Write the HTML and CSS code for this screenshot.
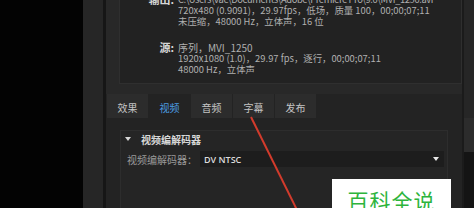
FILE: index.html
```html
<!DOCTYPE html>
<html lang="zh">
<head>
<meta charset="utf-8">
<link rel="stylesheet" href="styles.css">
</head>
<body>
<div class="app">
  <div class="blackcol"></div>
  <div class="side"></div>
  <div class="sep"></div>
  <div class="main">
    <div class="info">
      <div class="group">
        <div class="lbl">输出:</div>
        <div class="lines">
          <div class="path">C:\Users\Vae\Documents\Adobe\Premiere Pro\9.0\MVI_1250.avi</div>
          <div>720x480 (0.9091)，29.97fps，低场，质量 100，00;00;07;11</div>
          <div>未压缩，48000 Hz，立体声，16 位</div>
        </div>
      </div>
      <div class="group g2">
        <div class="lbl">源:</div>
        <div class="lines">
          <div class="first">序列，MVI_1250</div>
          <div>1920x1080 (1.0)，29.97 fps，逐行，00;00;07;11</div>
          <div>48000 Hz，立体声</div>
        </div>
      </div>
    </div>
    <div class="tabs">
      <div class="tab">效果</div>
      <div class="tab active">视频</div>
      <div class="tab">音频</div>
      <div class="tab">字幕</div>
      <div class="tab">发布</div>
    </div>
    <div class="content">
      <div class="section">
        <div class="sec-head"><span class="tri"></span>视频编解码器</div>
        <div class="row">
          <div class="row-lbl">视频编解码器：</div>
          <div class="select"><span>DV NTSC</span><span class="arrow"></span></div>
        </div>
      </div>
    </div>
  </div>
  <div class="sep2"></div>
  <div class="rightcol">
    <div class="rc-top"></div>
    <div class="rc-mid"></div>
    <div class="rc-bot"></div>
  </div>
</div>
<svg class="redline" width="474" height="208" viewBox="0 0 474 208"><line x1="251" y1="117" x2="298" y2="212" stroke="#d23b2c" stroke-width="2"/></svg>
<div class="badge">百科全说</div>
</body>
</html>
```
FILE: styles.css
```css
html, body {
  margin: 0;
  padding: 0;
  background: #000;
  width: 474px;
  height: 208px;
  overflow: hidden;
  font-family: "Noto Sans CJK SC", "Liberation Sans", sans-serif;
}
.app {
  display: flex;
  height: 208px;
  overflow: hidden;
}
.blackcol { width: 83px; background: #030303; flex: none; }
.side { width: 20px; background: #262626; flex: none; }
.sep { width: 3px; background: #161616; flex: none; }
.main {
  width: 356px;
  flex: none;
  background: #282828;
  display: flex;
  flex-direction: column;
  overflow: hidden;
}
.sep2 { width: 2px; background: #1b1b1b; flex: none; }
.rightcol { flex: 1; display: flex; flex-direction: column; }
.rc-top { height: 118px; background: #262626; flex: none; }
.rc-mid { height: 34px; background: #2c2c2c; flex: none; }
.rc-bot { flex: 1; background: #141414; }

.info {
  flex: none;
  margin: -6px 0 0 13px;
  height: 90px;
  box-sizing: border-box;
  background: #222;
  border: 1px solid #2f2f2f;
  border-top: none;
  font-size: 9.4px;
  line-height: 11px;
  color: #b0b0b0;
}
.group { display: flex; }
.g2 { margin-top: 15px; }
.lbl {
  width: 54px;
  text-align: right;
  padding-right: 4px;
  color: #d6d6d6;
  font-weight: bold;
  font-size: 11px;
  flex: none;
}
.lines { white-space: nowrap; }
.lines .path { letter-spacing: -0.4px; }
.lines .first { font-size: 10px; }

.tabs {
  flex: none;
  display: flex;
  margin-top: 10px;
  height: 24px;
  background: #232323;
  padding-left: 1px;
  gap: 1px;
}
.tab {
  width: 41px;
  background: #2c2c2c;
  color: #c4c4c4;
  font-size: 10px;
  display: flex;
  align-items: center;
  justify-content: center;
  padding-top: 2px;
}
.tab.active { background: #232323; color: #4b9be0; }

.content {
  flex: 1;
  min-height: 0;
  background: #232323;
  padding: 12px 14px 0 14px;
}
.section {
  border: 1px solid #2d2d2d;
  border-bottom: none;
  background: #252525;
  height: 80px;
}
.sec-head {
  height: 16px;
  display: flex;
  align-items: center;
  font-size: 10px;
  font-weight: bold;
  color: #d8d8d8;
  padding-left: 4px;
}
.tri {
  width: 0; height: 0;
  border-left: 3px solid transparent;
  border-right: 3px solid transparent;
  border-top: 4px solid #d8d8d8;
  margin-right: 10px;
}
.row {
  display: flex;
  align-items: center;
  margin-top: 4px;
  padding-left: 6px;
}
.row-lbl {
  width: 73px;
  font-size: 10px;
  color: #9a9a9a;
  flex: none;
}
.select {
  width: 244px;
  height: 16px;
  background: #1d1d1d;
  display: flex;
  align-items: center;
  justify-content: space-between;
  padding: 0 5px 0 4px;
  box-sizing: border-box;
  font-size: 9px;
  color: #dcdcdc;
  font-family: "Open Sans", "Liberation Sans", sans-serif;
  font-weight: 600;
}
.arrow {
  width: 0; height: 0;
  border-left: 3px solid transparent;
  border-right: 3px solid transparent;
  border-top: 4px solid #e8e8e8;
}
.redline {
  position: absolute;
  left: 0; top: 0;
}
.badge {
  position: absolute;
  left: 332px;
  top: 179px;
  width: 119px;
  height: 29px;
  overflow: hidden;
  background: #fff;
  color: #2db43c;
  font-size: 21px;
  line-height: 21px;
  text-align: center;
  padding-top: 11px;
  box-sizing: border-box;
  letter-spacing: 1px;
}
```
